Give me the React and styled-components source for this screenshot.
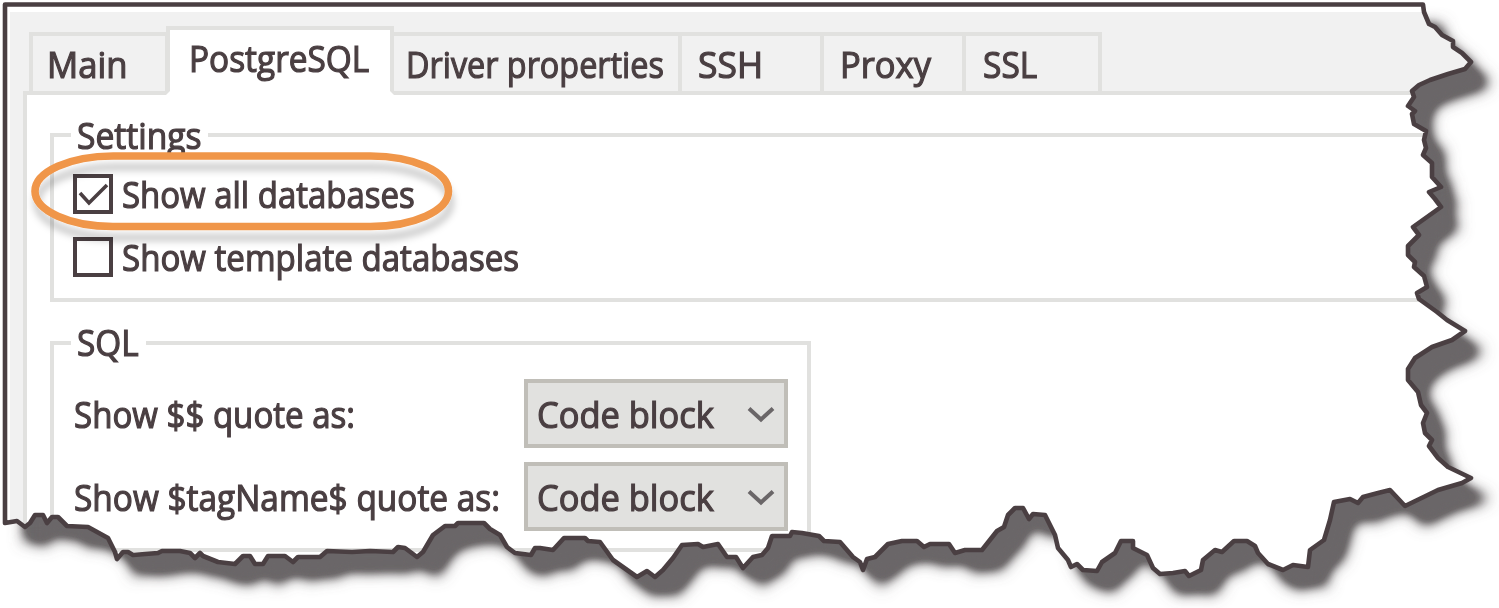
import React, { useLayoutEffect, useRef, useState } from "react";
import styled, { createGlobalStyle, css } from "styled-components";

const INK = "#4a3f42";
const LINE = "#e1e1df";
const FACE = "#f1f1f1";

const GlobalStyle = createGlobalStyle`
  * { box-sizing: border-box; }
  body { margin: 0; background: #fff; overflow: hidden; }
`;

/* Contour of the torn sheet, clockwise from the top left corner. */
const TORN = `M5 4.500 L1423 4.500 L1424 12 1429 24 1435 27 1442 35 1453 41 1453 47 1462 53 1471 62 1465 69
1448 74 1430 80 1419 85 1412 91 1414 97 1408 106 1415 111 1412 114 1414 124 1426 131 1424 140 1426 148
1423 155 1432 163 1432 177 1441 187 1429 192 1435 199 1441 207 1427 217 1413 227 1419 235 1408 246
1408 255 1415 262 1414 267 1424 276 1427 287 1417 293 1419 299 1437 312 1447 320 1465 331 1452 340
1432 347 1415 358 1408 369 1408 380 1418 392 1421 405 1427 413 1423 423 1425 433 1432 440 1429 446
1438 458 1448 467 1471 478 1462 483 1438 490 1405 506 1390 490 1378 493 1363 497 1358 503 1350 499
1334 502 1330 520 1324 540 1310 550 1308 567 1293 565 1283 570 1268 564 1258 553 1255 546 1247 541
1234 541 1222 552 1215 550 1203 560 1201 570 1189 576 1185 571 1173 573 1160 574 1153 568 1147 555
1133 548 1133 541 1121 541 1115 553 1102 562 1097 571 1083 570 1077 564 1071 567 1068 560 1058 548
1055 535 1045 515 1033 514 1029 519 1023 508 1015 508 1008 515 1004 527 997 531 982 550 965 550
955 553 949 544 930 544 924 547 917 541 902 541 888 544 875 557 867 559 863 570 860 562 853 557
840 542 824 541 819 536 802 533 792 532 790 536 772 536 768 548 762 555 753 557 743 568 736 557
727 557 718 544 703 547 698 544 682 545 673 558 663 570 655 577 647 571 637 577 613 560 600 542
588 541 585 538 564 538 553 550 540 548 535 548 531 555 515 553 507 547 500 535 490 529 484 523
458 523 455 526 445 526 433 535 423 552 417 557 405 548 398 547 393 552 370 551 352 552 327 551
320 557 298 557 293 562 285 556 268 556 263 564 255 564 250 556 243 556 235 564 218 562 203 556
200 553 195 558 190 553 180 551 162 551 158 553 133 555 128 552 123 552 117 559 115 552 108 538
88 527 67 526 58 517 52 517 47 523 43 515 35 515 30 523 25 527 17 521 5 523 Z`;

const Stage = styled.main`
  position: relative;
  width: 1499px;
  height: 608px;
  color: ${INK};
  font: 500 36px/46px "Open Sans", "Noto Sans", sans-serif;
  -webkit-text-stroke: 1.2px ${INK};
`;

const Overlay = styled.svg`
  position: absolute;
  inset: 0;
  pointer-events: none;
`;

const Sheet = styled.div`
  position: relative;
  height: 608px;
  padding: 12px 0 0 10px;
  clip-path: path("${TORN.replace(/\s+/g, " ")}");
`;

const Dialog = styled.div`
  height: 596px;
  padding: 14px 0 0 13px;
  background: ${FACE};
`;

const TabBar = styled.div`
  display: flex;
  align-items: flex-end;
  height: 69px;
  padding-left: 6px;
  margin-bottom: -4px;
  position: relative;
`;

const Tab = styled.div`
  width: ${(p) => p.$width}px;
  height: 63px;
  padding: ${(p) => p.$pad || "6px 0 0 14px"};
  border: 4px solid ${LINE};
  border-left-width: ${(p) => (p.$first ? 4 : 0)}px;
  ${(p) =>
    p.$first &&
    css`
      border-right-width: 1px;
    `}
  ${(p) =>
    p.$active &&
    css`
      height: 69px;
      background: #fff;
      border-left-width: 4px;
      border-bottom-color: #fff;
    `}
`;

const Page = styled.div`
  height: 520px;
  padding: 19px 0 0 23px;
  background: #fff;
  border: 4px solid ${LINE};
  border-right: 0;
`;

const Group = styled.section`
  width: ${(p) => p.$width}px;
  height: ${(p) => p.$height}px;
  margin-bottom: 20px;
  display: grid;
  grid-template-rows: 41px 1fr;
`;

/* The legend row: a short rule, the caption, and the rest of the rule. */
const Legend = styled.header`
  display: flex;
  height: 37px;
  &::before,
  &::after {
    content: "";
    flex: none;
    height: 4px;
    margin-top: 19px;
    background: ${LINE};
  }
  &::before { width: 21px; }
  &::after { flex: 1; }
`;

const Caption = styled.div`
  width: ${(p) => p.$width}px;
  margin-top: ${(p) => p.$shift}px;
  padding-left: 6px;
`;

const GroupBody = styled.div`
  margin-top: -22px;
  padding: ${(p) => p.$pad};
  border: 4px solid ${LINE};
  border-top: 0;
`;

const CheckRow = styled.label`
  display: flex;
  align-items: center;
  gap: 9px;
  height: 63px;
`;

const Box = styled.span`
  width: 40px;
  height: 40px;
  flex: none;
  border: 4px solid ${INK};
  background: #fff;
  svg { display: block; }
`;

const Field = styled.div`
  display: flex;
  align-items: center;
  justify-content: space-between;
  height: 69px;
  margin-bottom: 14px;
`;

const Select = styled.div`
  display: flex;
  align-items: center;
  justify-content: space-between;
  width: 264px;
  height: 69px;
  padding: 0 9px;
  background: #e1e1df;
  border: 4px solid #c0beb8;
`;

const FitBox = styled.span`
  display: block;
  width: ${(p) => p.$width}px;
  height: 44px;
  white-space: nowrap;
`;

const FitText = styled.span`
  display: inline-block;
  transform-origin: 0 0;
`;

/* Condenses a caption horizontally so that it fills the given width. */
function Fit({ width, children }) {
  const ref = useRef(null);
  const [scale, setScale] = useState(1);
  useLayoutEffect(() => {
    setScale(width / ref.current.offsetWidth);
  }, [width]);
  return (
    <FitBox $width={width}>
      <FitText ref={ref} style={{ transform: `scaleX(${scale})` }}>
        {children}
      </FitText>
    </FitBox>
  );
}

function Chevron() {
  return (
    <svg width="28" height="18" viewBox="0 0 28 18" fill="none" stroke="#6a6668" strokeWidth="4">
      <path d="M2 3.500 L14 14.500 L26 3.500" />
    </svg>
  );
}

function Choice({ label, width }) {
  return (
    <Field>
      <Fit width={width}>{label}</Fit>
      <Select>
        <Fit width={177}>Code block</Fit>
        <Chevron />
      </Select>
    </Field>
  );
}

const tabs = [
  { label: "Main", width: 137, text: 81, first: true },
  { label: "PostgreSQL", width: 228, text: 180, active: true, pad: "6px 0 0 19px" },
  { label: "Driver properties", width: 288, text: 258, pad: "6px 0 0 12px" },
  { label: "SSH", width: 142, text: 65, pad: "6px 0 0 16px" },
  { label: "Proxy", width: 142, text: 91, pad: "6px 0 0 16px" },
  { label: "SSL", width: 136, text: 54, pad: "6px 0 0 17px" },
];

export default function App() {
  return (
    <Stage>
      <GlobalStyle />
      <Overlay width="1499" height="608">
        <defs>
          <filter id="soft" x="-5%" y="-5%" width="110%" height="115%">
            <feGaussianBlur stdDeviation="7.5" />
            <feComponentTransfer>
              <feFuncA type="table" tableValues="0 0.14 0.35 0.6 0.84 0.98 1 1 1" />
            </feComponentTransfer>
          </filter>
        </defs>
        <path d={TORN} transform="translate(19 20)" fill="#6a6668" filter="url(#soft)" />
        <path d={TORN} fill="#fff" />
      </Overlay>
      <Sheet>
        <Dialog>
          <TabBar>
            {tabs.map((t) => (
              <Tab key={t.label} $width={t.width} $active={t.active} $first={t.first} $pad={t.pad}>
                <Fit width={t.text}>{t.label}</Fit>
              </Tab>
            ))}
          </TabBar>
          <Page>
            <Group $width={1480} $height={188}>
              <Legend>
                <Caption $width={137} $shift={-1}>
                  <Fit width={125}>Settings</Fit>
                </Caption>
              </Legend>
              <GroupBody $pad="29px 0 0 19px">
                <CheckRow>
                  <Box>
                    <svg width="32" height="32" fill="none" stroke={INK} strokeWidth="3.6">
                      <path d="M3 15 L12 25 L30 7" />
                    </svg>
                  </Box>
                  <Fit width={293}>Show all databases</Fit>
                </CheckRow>
                <CheckRow>
                  <Box />
                  <Fit width={397}>Show template databases</Fit>
                </CheckRow>
              </GroupBody>
            </Group>
            <Group $width={761} $height={230}>
              <Legend>
                <Caption $width={75} $shift={-2}>
                  <Fit width={62}>SQL</Fit>
                </Caption>
              </Legend>
              <GroupBody $pad="38px 19px 0 20px">
                <Choice label="Show $$ quote as:" width={281} />
                <Choice label="Show $tagName$ quote as:" width={426} />
              </GroupBody>
            </Group>
          </Page>
        </Dialog>
      </Sheet>
      <Overlay width="1499" height="608" fill="none">
        <defs>
          <filter id="ringShadow" x="-10%" y="-20%" width="120%" height="160%">
            <feDropShadow dx="2" dy="11" stdDeviation="3.5" floodColor="#000" floodOpacity="0.2" />
          </filter>
        </defs>
        <path d={TORN} stroke={INK} strokeWidth="4.600" strokeLinejoin="round" />
        <rect x="35" y="156" width="413.500" height="70.500" rx="78" ry="35.250" stroke="#f0964a" strokeWidth="7.600" filter="url(#ringShadow)" />
      </Overlay>
    </Stage>
  );
}
